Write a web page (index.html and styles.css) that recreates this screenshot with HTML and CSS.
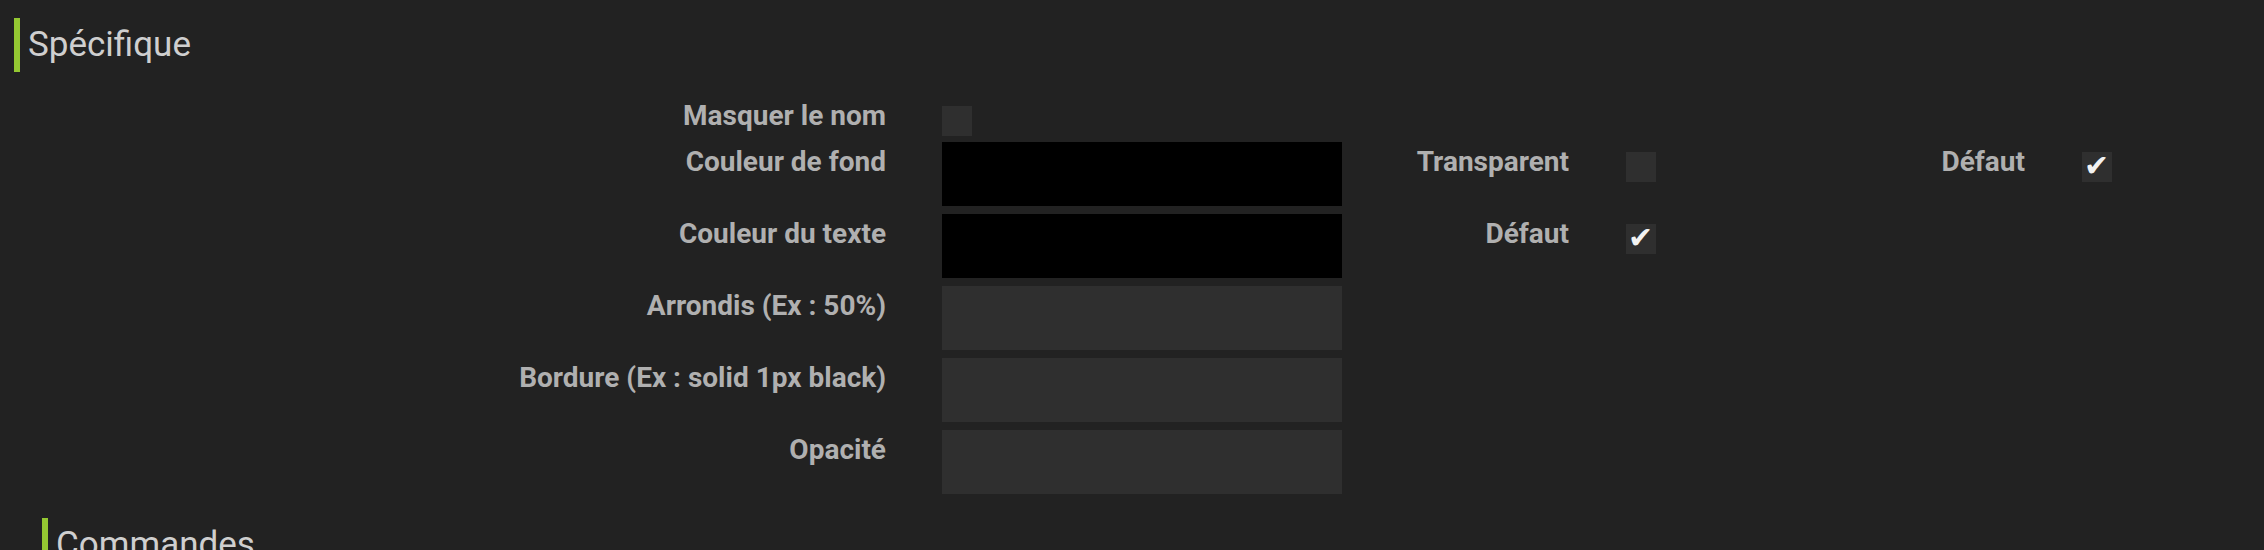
FILE: index.html
```html
<!DOCTYPE html>
<html lang="fr">
<head>
<meta charset="UTF-8" />
<meta name="viewport" content="width=device-width, initial-scale=1" />
<title>Configuration du widget</title>
<link rel="stylesheet" href="styles.css">
</head>
<body>

<div class="panel">
  <h3 class="legend">Spécifique</h3>

  <form class="form-specific">
    <div class="form-row form-row--short">
      <label class="form-label">Masquer le nom</label>
      <input type="checkbox" class="check" />
    </div>
    <div class="form-row">
      <label class="form-label">Couleur de fond</label>
      <input type="text" class="form-input form-input--black" />
      <label class="form-label form-label--mid">Transparent</label>
      <input type="checkbox" class="check" />
      <label class="form-label form-label--far">Défaut</label>
      <input type="checkbox" class="check" checked />
    </div>
    <div class="form-row">
      <label class="form-label">Couleur du texte</label>
      <input type="text" class="form-input form-input--black" />
      <label class="form-label form-label--mid">Défaut</label>
      <input type="checkbox" class="check" checked />
    </div>
    <div class="form-row">
      <label class="form-label">Arrondis (Ex : 50%)</label>
      <input type="text" class="form-input" />
    </div>
    <div class="form-row">
      <label class="form-label">Bordure (Ex : solid 1px black)</label>
      <input type="text" class="form-input" />
    </div>
    <div class="form-row">
      <label class="form-label">Opacité</label>
      <input type="text" class="form-input" />
    </div>
  </form>

  <div class="sub-panel">
    <h3 class="legend">Commandes</h3>
  </div>
</div>

</body>
</html>
```

FILE: styles.css
```css
body {
  margin: 0;
  background: #222222;
  font-family: Roboto, "Noto Sans", sans-serif;
  overflow: hidden;
}
.panel {
  padding: 18px 14px 0 14px;
}
.legend {
  margin: 0 0 24px 0;
  height: 54px;
  border-left: 6px solid #94c832;
  padding-left: 8px;
  font-size: 35px;
  font-weight: 400;
  line-height: 54px;
  color: #cfcfcf;
}
.form-specific {
  margin: 0;
}
.form-row {
  display: grid;
  grid-template-columns: 928px 400px 284px 30px 426px 30px;
  align-items: start;
  margin-bottom: 8px;
}
.form-row--short {
  margin-bottom: 6px;
}
.form-label {
  grid-column: 1;
  text-align: right;
  padding-right: 56px;
  font-size: 28px;
  font-weight: 700;
  line-height: 40px;
  color: #b0b0b0;
}
.form-label--mid {
  grid-column: 3;
  padding-right: 57px;
}
.form-label--far {
  grid-column: 5;
  padding-right: 57px;
}
.form-input {
  grid-column: 2;
  box-sizing: border-box;
  width: 400px;
  height: 64px;
  margin: 0;
  border: none;
  padding: 0 12px;
  background: #2f2f2f;
  color: #dddddd;
  font-size: 24px;
}
.form-input--black {
  background: #000000;
}
.check {
  appearance: none;
  -webkit-appearance: none;
  position: relative;
  width: 30px;
  height: 30px;
  margin: 10px 0 0 0;
  background: #2f2f2f;
  border: none;
  border-radius: 0;
}
.check:checked::after {
  content: "\2714";
  position: absolute;
  left: 2px;
  top: -1px;
  font-family: "DejaVu Sans", sans-serif;
  font-size: 30px;
  line-height: 30px;
  color: #f2f2f2;
}
.sub-panel {
  padding-left: 28px;
  margin-top: 24px;
}
```
